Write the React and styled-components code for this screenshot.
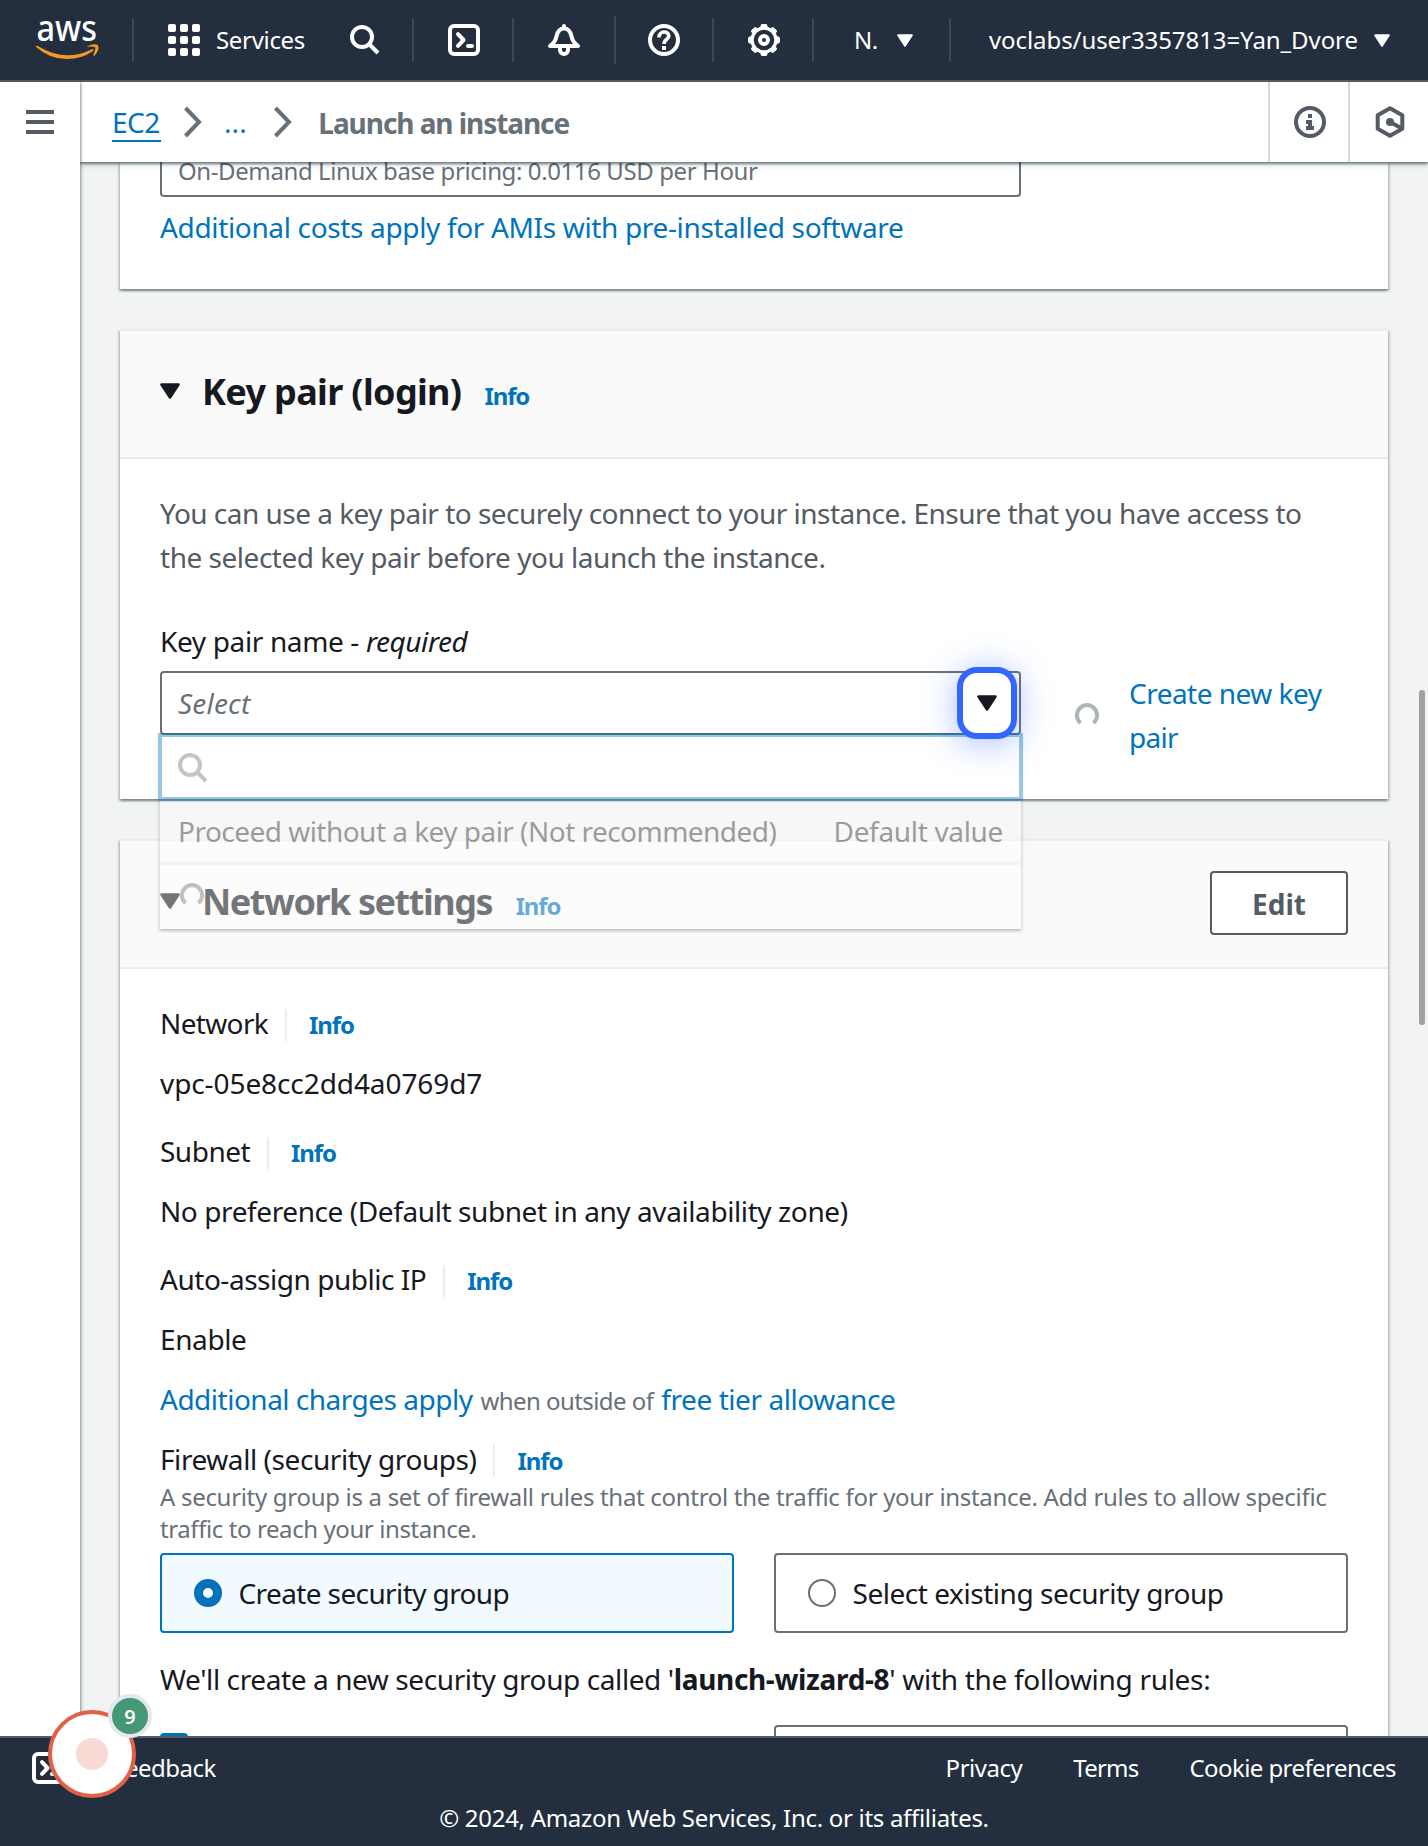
import React from 'react';
import styled, { createGlobalStyle } from 'styled-components';

const GlobalStyle = createGlobalStyle`
  *, *::before, *::after { box-sizing: border-box; }
  html, body { margin: 0; padding: 0; overflow: hidden; }
  body { font-family: 'Noto Sans', 'Open Sans', sans-serif; }
`;

const color = {
  navy: '#232f3e',
  ink: '#16191f',
  body: '#545b64',
  hint: '#687078',
  link: '#0073bb',
  line: '#eaeded',
};

const cardShadow =
  '0 2px 2px 0 rgba(0,28,36,.3), 2px 2px 2px 0 rgba(0,28,36,.15), -2px 2px 2px 0 rgba(0,28,36,.15)';

const Page = styled.div`
  position: relative;
  display: flex;
  flex-direction: column;
  width: 1428px;
  height: 1846px;
  overflow: hidden;
  background: #f2f3f3;
  color: ${color.ink};
`;

/* ---------- text ---------- */

const Text = styled.span`
  display: ${(p) => (p.$block ? 'block' : 'inline')};
  font-size: ${(p) => (p.$small ? 24 : 28)}px;
  line-height: ${(p) => (p.$small ? 32 : 44)}px;
  font-weight: ${(p) => (p.$bold ? 700 : 400)};
  font-style: ${(p) => (p.$italic ? 'italic' : 'normal')};
  letter-spacing: ${(p) => p.$track || -0.45}px;
  color: ${(p) => p.$color || 'inherit'};
  white-space: pre;
`;

const Link = styled(Text).attrs({ as: 'a' })`
  color: ${color.link};
  text-decoration: none;
`;

const InfoLink = styled.a`
  font-size: 24px;
  line-height: 32px;
  font-weight: 700;
  letter-spacing: -1.1px;
  color: ${color.link};
`;

/* ---------- top navigation ---------- */

const TopNav = styled.header`
  display: flex;
  align-items: center;
  flex: none;
  height: 82px;
  background: ${color.navy};
  border-bottom: 2px solid #545b64;
  color: #fff;
`;

const NavCell = styled.div`
  display: flex;
  align-items: center;
  flex: none;
  width: ${(p) => p.$width}px;
  padding-left: ${(p) => p.$inset || 34}px;
  gap: ${(p) => p.$gap || 0}px;
`;

const NavDivider = styled.div`
  flex: none;
  width: 2px;
  height: ${(p) => (p.$tall ? 48 : 44)}px;
  background: #414750;
`;

const Pad = styled.div`
  margin-left: ${(p) => p.$left}px;
  display: flex;
`;

/* ---------- shell ---------- */

const Shell = styled.div`
  display: flex;
  flex: 1;
  min-height: 0;
`;

const SideRail = styled.nav`
  position: relative;
  z-index: 3;
  flex: none;
  width: 80px;
  padding: 28px 0 0 26px;
  background: #fff;
  box-shadow: 1px 0 2px 0 rgba(0, 28, 36, 0.3), 2px 2px 3px 0 rgba(0, 28, 36, 0.15);
`;

const Burger = styled.div`
  display: flex;
  flex-direction: column;
  gap: 6px;
`;

const BurgerBar = styled.div`
  width: 28px;
  height: 4px;
  background: #545b64;
`;

const Main = styled.main`
  display: flex;
  flex-direction: column;
  flex: 1;
  min-width: 0;
`;

const CrumbBar = styled.div`
  position: relative;
  z-index: 2;
  display: flex;
  align-items: center;
  flex: none;
  height: 80px;
  padding-left: 32px;
  background: #fff;
  box-shadow: 0 2px 2px 0 rgba(0, 28, 36, 0.45), 0 3px 5px 0 rgba(0, 28, 36, 0.2);
`;

const CrumbLink = styled.a`
  width: 49px;
  font-size: 28px;
  line-height: 41px;
  height: 40px;
  letter-spacing: -0.48px;
  color: ${color.link};
  box-shadow: inset 0 -2px 0 ${color.link};
`;

const CrumbCurrent = styled.span`
  padding-top: 1px;
  font-size: 28px;
  line-height: 44px;
  font-weight: 700;
  letter-spacing: -1.06px;
  color: ${color.hint};
`;

const Chevron = styled.svg`
  flex: none;
  margin: 0 ${(p) => p.$right}px 0 ${(p) => p.$left}px;
`;

const CrumbTools = styled.div`
  display: flex;
  margin-left: auto;
  height: 100%;
`;

const CrumbTool = styled.button`
  display: flex;
  align-items: center;
  justify-content: center;
  width: 80px;
  padding: 0 0 0 2px;
  border: 0;
  border-left: 2px solid #d5dbdb;
  background: #fff;
`;

const Content = styled.div`
  flex: 1;
  min-height: 0;
  overflow: hidden;
  padding: 0 40px;
`;

/* ---------- cards ---------- */

const Card = styled.section`
  background: #fff;
  border-top: ${(p) => (p.$cut ? '0' : `2px solid ${color.line}`)};
  margin-bottom: 40px;
  box-shadow: ${cardShadow};
`;

const CardHeader = styled.div`
  display: flex;
  align-items: flex-start;
  justify-content: space-between;
  height: 128px;
  padding: 30px 40px 0;
  background: #fafafa;
  border-bottom: 2px solid ${color.line};
`;

const CardTitleGroup = styled.div`
  display: flex;
  align-items: baseline;
  margin-top: 9px;
`;

const TitleCaret = styled.svg`
  align-self: flex-start;
  margin: 13px 22px 0 0;
`;

const CardTitle = styled.h2`
  margin: 0 ${(p) => p.$gap}px 0 0;
  font-size: 36px;
  line-height: 44px;
  font-weight: 700;
  letter-spacing: ${(p) => p.$track}px;
  white-space: nowrap;
`;

const CardBody = styled.div`
  padding: ${(p) => (p.$flush ? 0 : 32)}px 40px 40px;
`;

const EditButton = styled.button`
  width: 138px;
  height: 64px;
  padding: 1px 0 0 0;
  border: 2px solid #545b64;
  border-radius: 4px;
  background: #fff;
  color: #545b64;
  font: 700 28px/44px 'Noto Sans', sans-serif;
`;

const PricingBox = styled.div`
  display: flex;
  width: 861px;
  height: 35px;
  margin-bottom: 8px;
  padding-left: 16px;
  border: 2px solid ${color.hint};
  border-top: 0;
  border-radius: 0 0 4px 4px;
`;

const PricingLine = styled.div`
  margin-top: -7px;
  height: 32px;
  display: flex;
`;

/* ---------- key pair form ---------- */

const FieldLabel = styled.div`
  display: flex;
  margin: 40px 0 8px;
`;

const KeyPairRow = styled.div`
  display: flex;
  align-items: flex-start;
`;

const SelectWrap = styled.div`
  position: relative;
  z-index: 1;
  width: 861px;
  height: 64px;
`;

const SelectBox = styled.div`
  display: flex;
  align-items: center;
  justify-content: space-between;
  height: 64px;
  padding: 0 22px 0 16px;
  border: 2px solid ${color.hint};
  border-radius: 4px;
  background: #fff;
`;

const FocusRing = styled.div`
  position: absolute;
  top: -4px;
  right: 4px;
  width: 60px;
  height: 72px;
  border: 6px solid #3366ff;
  border-radius: 20px;
  box-shadow: 0 4px 34px rgba(51, 102, 255, 0.42);
`;

const Dropdown = styled.div`
  position: absolute;
  top: 64px;
  left: 0;
  width: 861px;
  background: #fff;
  opacity: 0.4;
  box-shadow: 0 2px 2px 0 rgba(0, 28, 36, 0.4), 2px 2px 3px 0 rgba(0, 28, 36, 0.18), -2px 2px 3px 0 rgba(0, 28, 36, 0.18);
`;

const SearchBox = styled.div`
  display: flex;
  align-items: center;
  height: 64px;
  padding: 2px 0 0 16px;
  border: 2px solid ${color.link};
  box-shadow: 0 0 0 2px ${color.link};
`;

const Option = styled.div`
  display: flex;
  justify-content: space-between;
  height: 66px;
  padding: 10px 18px 0;
  border-bottom: 4px solid ${color.line};
`;

const LoadingRow = styled.div`
  height: 64px;
  padding: 18px 20px;
`;

const RefreshSlot = styled.div`
  margin: 32px 30px 0 54px;
  height: 24px;
`;

/* ---------- network settings ---------- */

const Property = styled.div`
  margin-bottom: ${(p) => (p.$tight ? 16 : 24)}px;
`;

const PropertyLabel = styled.div`
  display: flex;
  align-items: baseline;
  height: 44px;
  margin-bottom: ${(p) => (p.$flush ? 0 : 16)}px;
`;

const LabelDivider = styled.span`
  align-self: flex-start;
  width: 2px;
  height: 32px;
  margin: 8px 22.5px 0 16.5px;
  background: ${color.line};
`;

const ChargesLine = styled.div`
  display: flex;
  align-items: baseline;
  gap: 8px;
  height: 44px;
  margin-bottom: 16px;
`;

const TileRow = styled.div`
  display: flex;
  gap: 40px;
  margin: 8px 0 24px;
`;

const Tile = styled.label`
  display: flex;
  flex: 1;
  height: 80px;
  padding: 16px 32px;
  gap: 16.5px;
  border: 2px solid ${(p) => (p.$selected ? color.link : color.hint)};
  border-radius: 4px;
  background: ${(p) => (p.$selected ? '#f1faff' : '#fff')};
`;

const Radio = styled.span`
  flex: none;
  width: 28px;
  height: 28px;
  margin-top: 8px;
  border-radius: 50%;
  background: #fff;
  border: ${(p) => (p.$selected ? `9px solid ${color.link}` : `2px solid ${color.hint}`)};
`;

const RuleRow = styled.div`
  display: grid;
  grid-template-columns: 1fr 1fr;
  gap: 40px;
  margin-top: 24px;
`;

const Checkbox = styled.span`
  width: 28px;
  height: 28px;
  margin-top: 8px;
  border-radius: 4px;
  background: ${color.link};
`;

const RuleSelect = styled.div`
  height: 64px;
  border: 2px solid ${color.hint};
  border-radius: 4px;
`;

/* ---------- footer and overlays ---------- */

const Footer = styled.footer`
  position: relative;
  z-index: 4;
  flex: none;
  height: 110px;
  padding: 14px 32px 0;
  background: ${color.navy};
  border-top: 2px solid #545b64;
  color: #fff;
`;

const FooterRow = styled.div`
  display: flex;
  align-items: center;
  height: 32px;
`;

const FooterLinks = styled.div`
  display: flex;
  gap: 51px;
  margin-left: auto;
`;

const Copyright = styled.div`
  margin-top: 18px;
  text-align: center;
  line-height: 32px;
`;

const ScrollThumb = styled.div`
  position: absolute;
  z-index: 3;
  top: 690px;
  right: 3px;
  width: 6px;
  height: 335px;
  border-radius: 3px;
  background: #a0a1a1;
`;

const RecordButton = styled.div`
  position: absolute;
  z-index: 5;
  left: 48px;
  top: 1710px;
  display: flex;
  align-items: center;
  justify-content: center;
  width: 88px;
  height: 88px;
  border: 4px solid #e25f48;
  border-radius: 50%;
  background: #fff;
`;

const RecordDot = styled.div`
  width: 32px;
  height: 32px;
  border-radius: 50%;
  background: #f7dad4;
`;

const RecordBadge = styled.div`
  position: absolute;
  z-index: 6;
  left: 108px;
  top: 1694px;
  width: 44px;
  height: 44px;
  border: 4px solid #e4e7ef;
  border-radius: 50%;
  background: #449876;
  color: #fff;
  text-align: center;
  font: 600 20px/37px 'Noto Sans', sans-serif;
`;

/* ---------- icons ---------- */

const LogoSvg = styled.svg`
  overflow: visible;
`;

function AwsLogo() {
  return (
    <LogoSvg width="64" height="80" viewBox="0 -19 64 80">
      <text
        x="1.5"
        y="22"
        fill="#fff"
        fontFamily="'Noto Sans', sans-serif"
        fontSize="37"
        fontWeight="500"
        textLength="60.5"
        lengthAdjust="spacingAndGlyphs"
      >
        aws
      </text>
      <g fill="#f8991d">
        <path d="M.6 27.4Q1.6 26.2 3.6 27.6Q30 43.5 56.4 30.4Q59.6 29.2 58 32Q47 40 31.6 40Q14.5 40 .6 27.4Z" />
        <path d="M51.6 28Q56.4 24 63 26Q65 31 59.2 37Q57.8 37.2 58.8 34.6Q60.9 29.6 60.2 28.2Q56.6 27 51.6 28Z" />
      </g>
    </LogoSvg>
  );
}

function GridIcon() {
  return (
    <svg width="32" height="32" fill="#fff">
      {[0, 12, 24].map((y) => [0, 12, 24].map((x) => <rect key={x + '-' + y} x={x} y={y} width="8" height="8" rx="2" />))}
    </svg>
  );
}

function SearchIcon({ stroke = '#fff' }) {
  return (
    <svg width="30" height="30" fill="none" stroke={stroke} strokeWidth="4">
      <circle cx="12" cy="12" r="10" />
      <path d="M19 19L28 28" />
    </svg>
  );
}

function ShellIcon() {
  return (
    <svg width="32" height="32" fill="none" stroke="#fff" strokeWidth="4">
      <rect x="2" y="2" width="28" height="28" rx="4" />
      <path d="M10 10.2L15.6 16L10 21.8" strokeLinecap="round" strokeLinejoin="round" />
      <path d="M20 22H24" strokeLinecap="round" />
    </svg>
  );
}

function BellIcon() {
  return (
    <svg width="32" height="32" fill="none" stroke="#fff" strokeWidth="4" strokeLinejoin="round" strokeLinecap="round">
      <path d="M16 2V4" />
      <path d="M2 22C7 18 7.6 16 8.6 12C9.8 7 12 4.6 16 4.6S22.2 7 23.4 12C24.4 16 25 18 30 22Z" />
      <path d="M12 23.5V26a4 4 0 0 0 8 0V23.5" />
    </svg>
  );
}

function HelpIcon() {
  return (
    <svg width="32" height="32" fill="none" stroke="#fff" strokeWidth="4">
      <circle cx="16" cy="16" r="14" />
      <path d="M11 13.5C11 6.3 20.8 6.6 20.8 12C20.8 15.4 16 15.2 16 20" strokeWidth="3.6" />
      <path d="M14 24H18" />
    </svg>
  );
}

const gearOutline = Array.from({ length: 8 }, (_, i) =>
  [[-15, 13.2], [-9, 15.6], [9, 15.6], [15, 13.2]].map(([offset, r]) => {
    const a = ((i * 45 + offset) * Math.PI) / 180;
    return `${(16 + r * Math.sin(a)).toFixed(2)},${(16 - r * Math.cos(a)).toFixed(2)}`;
  })
).flat();

function GearIcon() {
  return (
    <svg width="32" height="32">
      <polygon points={gearOutline.join(' ')} fill="#fff" stroke="#fff" strokeWidth="1" strokeLinejoin="round" />
      <circle cx="16" cy="16" r="10.3" fill={color.navy} />
      <circle cx="16" cy="16" r="4" fill="none" stroke="#fff" strokeWidth="4" />
    </svg>
  );
}

function Caret({ width, height, fill, as: As = 'svg' }) {
  return (
    <As width={width} height={height} viewBox="0 0 20 16">
      <path d="M1.5 1.5H18.5L10 14.5Z" fill={fill} stroke={fill} strokeWidth="2.6" strokeLinejoin="round" />
    </As>
  );
}

function CrumbChevron({ left, right }) {
  return (
    <Chevron width="18" height="32" $left={left} $right={right} fill="none" stroke="#687078" strokeWidth="4">
      <path d="M1.5 2L15 16L1.5 30" />
    </Chevron>
  );
}

function InfoIcon() {
  return (
    <svg width="32" height="32" fill="#545b64">
      <circle cx="16" cy="16" r="14" fill="none" stroke="#545b64" strokeWidth="4" />
      <path d="M14 8h4v4h-4zM12 14h6v6h2v4h-8v-4h2v-2h-2z" />
    </svg>
  );
}

function HexIcon() {
  return (
    <svg width="32" height="32" fill="none" stroke="#545b64" strokeWidth="4" strokeLinejoin="round">
      <path d="M16 2.3L28.3 9.2V22.8L16 29.7L3.7 22.8V9.2Z" />
      <path d="M16 16L27 22" />
      <circle cx="16" cy="16" r="4" fill="#545b64" stroke="none" />
    </svg>
  );
}

function Spinner({ stroke }) {
  return (
    <svg width="24" height="24" fill="none" stroke={stroke} strokeWidth="4">
      <path d="M5.6 20A10.1 10.1 0 1 1 18.4 20" />
    </svg>
  );
}

/* ---------- composed parts ---------- */

function SectionHeader({ title, track, gap, children }) {
  return (
    <CardHeader>
      <CardTitleGroup>
        <Caret as={TitleCaret} width="20" height="16" fill={color.ink} />
        <CardTitle $track={track} $gap={gap}>{title}</CardTitle>
        <InfoLink>Info</InfoLink>
      </CardTitleGroup>
      {children}
    </CardHeader>
  );
}

function LabelWithInfo({ label, track, flush }) {
  return (
    <PropertyLabel $flush={flush}>
      <Text $track={track}>{label}</Text>
      <LabelDivider />
      <InfoLink>Info</InfoLink>
    </PropertyLabel>
  );
}

const properties = [
  { label: 'Network', track: -0.65, value: 'vpc-05e8cc2dd4a0769d7', valueTrack: -0.09 },
  { label: 'Subnet', track: -0.5, value: 'No preference (Default subnet in any availability zone)', valueTrack: -0.41 },
  { label: 'Auto-assign public IP', track: -0.47, value: 'Enable', valueTrack: -0.4, tight: true },
];

export default function App() {
  return (
    <Page>
      <GlobalStyle />
      <TopNav>
        <NavCell $width={132} $inset={35}><AwsLogo /></NavCell>
        <NavDivider />
        <NavCell $width={278}>
          <GridIcon />
          <Pad $left={16}><Text $small $track={-0.32}>Services</Text></Pad>
          <Pad $left={45}><SearchIcon /></Pad>
        </NavCell>
        <NavDivider />
        <NavCell $width={98}><ShellIcon /></NavCell>
        <NavDivider />
        <NavCell $width={100}><BellIcon /></NavCell>
        <NavDivider $tall />
        <NavCell $width={96} $inset={32}><HelpIcon /></NavCell>
        <NavDivider />
        <NavCell $width={98}><GearIcon /></NavCell>
        <NavDivider />
        <NavCell $width={135} $inset={40} $gap={19.5}>
          <Text $small $track={-0.6}>N.</Text>
          <Caret width="16" height="13" fill="#fff" />
        </NavCell>
        <NavDivider />
        <NavCell $width={477} $inset={38} $gap={16}>
          <Text $small $track={-0.08}>voclabs/user3357813=Yan_Dvore</Text>
          <Caret width="16" height="13" fill="#fff" />
        </NavCell>
      </TopNav>

      <Shell>
        <SideRail>
          <Burger><BurgerBar /><BurgerBar /><BurgerBar /></Burger>
        </SideRail>
        <Main>
          <CrumbBar>
            <CrumbLink>EC2</CrumbLink>
            <CrumbChevron left={23} right={22} />
            <Link $track={0.1}>...</Link>
            <CrumbChevron left={27} right={26.5} />
            <CrumbCurrent>Launch an instance</CrumbCurrent>
            <CrumbTools>
              <CrumbTool><InfoIcon /></CrumbTool>
              <CrumbTool><HexIcon /></CrumbTool>
            </CrumbTools>
          </CrumbBar>

          <Content>
            <Card $cut>
              <CardBody $flush>
                <PricingBox>
                  <PricingLine>
                    <Text $small $track={-0.4} $color={color.hint}>On-Demand Linux base pricing: 0.0116 USD per Hour</Text>
                  </PricingLine>
                </PricingBox>
                <Link $block $track={-0.345}>Additional costs apply for AMIs with pre-installed software</Link>
              </CardBody>
            </Card>

            <Card>
              <SectionHeader title="Key pair (login)" track={-0.64} gap={23} />
              <CardBody>
                <Text $block $track={-0.525} $color={color.body}>You can use a key pair to securely connect to your instance. Ensure that you have access to</Text>
                <Text $block $track={-0.475} $color={color.body}>the selected key pair before you launch the instance.</Text>
                <FieldLabel>
                  <Text $track={-0.36}>Key pair name - </Text>
                  <Text $italic $track={-0.45}>required</Text>
                </FieldLabel>
                <KeyPairRow>
                  <SelectWrap>
                    <SelectBox>
                      <Text $italic $track={0.2} $color={color.hint}>Select</Text>
                      <Caret width="20" height="16" fill={color.ink} />
                    </SelectBox>
                    <Dropdown>
                      <SearchBox><SearchIcon stroke={color.hint} /></SearchBox>
                      <Option>
                        <Text $track={-0.53}>Proceed without a key pair (Not recommended)</Text>
                        <Text $track={-0.33}>Default value</Text>
                      </Option>
                      <LoadingRow><Spinner stroke={color.hint} /></LoadingRow>
                    </Dropdown>
                    <FocusRing />
                  </SelectWrap>
                  <RefreshSlot><Spinner stroke="#aab7b8" /></RefreshSlot>
                  <div>
                    <Link $block $track={-0.52}>Create new key</Link>
                    <Link $block $track={-0.7}>pair</Link>
                  </div>
                </KeyPairRow>
              </CardBody>
            </Card>

            <Card>
              <SectionHeader title="Network settings" track={-1.447} gap={23.5}>
                <EditButton>Edit</EditButton>
              </SectionHeader>
              <CardBody>
                {properties.map((p) => (
                  <Property key={p.label} $tight={p.tight}>
                    <LabelWithInfo label={p.label} track={p.track} />
                    <Text $block $track={p.valueTrack}>{p.value}</Text>
                  </Property>
                ))}
                <ChargesLine>
                  <Link $track={-0.5}>Additional charges apply</Link>
                  <Text $small $track={-0.56} $color={color.hint}>when outside of</Text>
                  <Link $track={-0.44}>free tier allowance</Link>
                </ChargesLine>
                <LabelWithInfo label="Firewall (security groups)" track={-0.43} flush />
                <Text $block $small $track={-0.305} $color={color.hint}>A security group is a set of firewall rules that control the traffic for your instance. Add rules to allow specific</Text>
                <Text $block $small $track={-0.41} $color={color.hint}>traffic to reach your instance.</Text>
                <TileRow>
                  <Tile $selected>
                    <Radio $selected />
                    <Text $track={-0.61}>Create security group</Text>
                  </Tile>
                  <Tile>
                    <Radio />
                    <Text $track={-0.46}>Select existing security group</Text>
                  </Tile>
                </TileRow>
                <Text $block $track={-0.4}>
                  We'll create a new security group called '
                  <Text $bold $track={-0.34}>launch-wizard-8</Text>
                  <Text $track={-0.3}>' with the following rules:</Text>
                </Text>
                <RuleRow>
                  <Checkbox />
                  <RuleSelect />
                </RuleRow>
              </CardBody>
            </Card>
          </Content>
        </Main>
      </Shell>

      <Footer>
        <FooterRow>
          <ShellIcon />
          <Pad $left={49}><Text $small $track={-0.5}>Feedback</Text></Pad>
          <FooterLinks>
            <Text $small $track={-0.47}>Privacy</Text>
            <Text $small $track={-0.8}>Terms</Text>
            <Text $small $track={-0.57}>Cookie preferences</Text>
          </FooterLinks>
        </FooterRow>
        <Copyright><Text $small $track={-0.3}>© 2024, Amazon Web Services, Inc. or its affiliates.</Text></Copyright>
      </Footer>

      <ScrollThumb />
      <RecordButton><RecordDot /></RecordButton>
      <RecordBadge>9</RecordBadge>
    </Page>
  );
}
